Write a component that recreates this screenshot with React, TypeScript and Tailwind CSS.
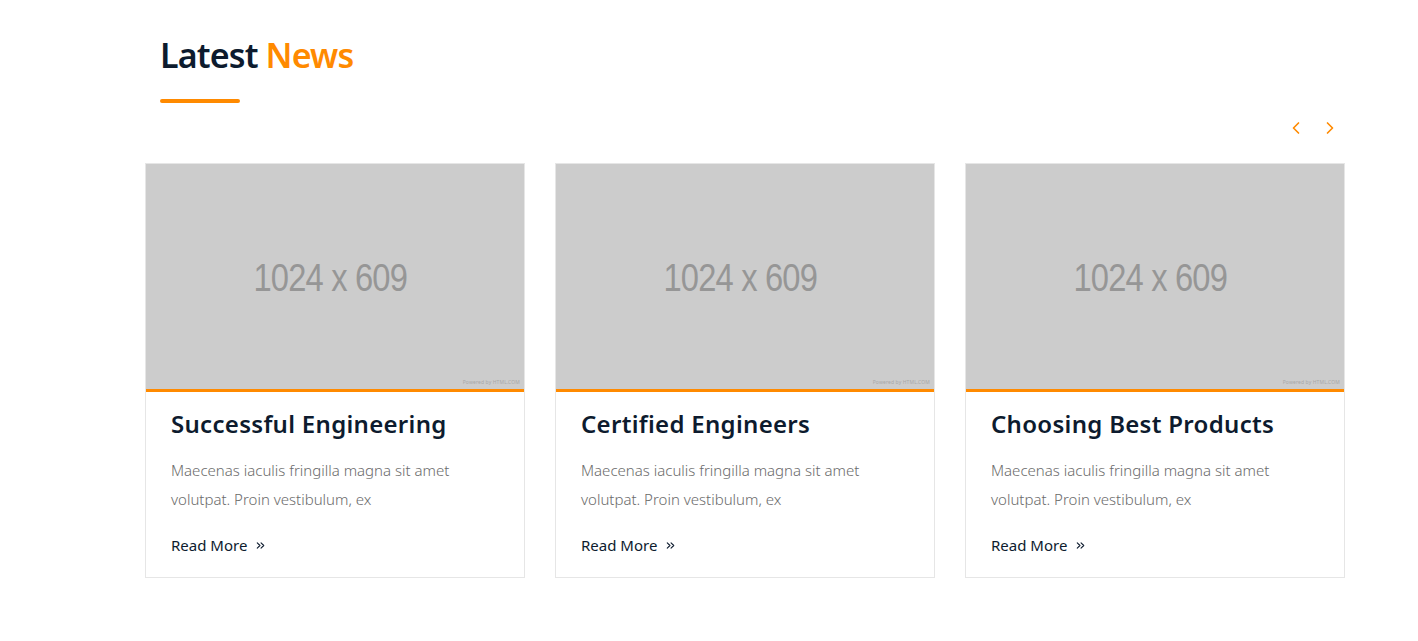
import React from 'react';
import { ChevronLeft, ChevronRight, ChevronsRight } from 'lucide-react';

const posts = [
  { id: 1, title: 'Successful Engineering' },
  { id: 2, title: 'Certified Engineers' },
  { id: 3, title: 'Choosing Best Products' },
];

const excerpt = 'Maecenas iaculis fringilla magna sit amet volutpat. Proin vestibulum, ex';

const Placeholder: React.FC = () => (
  <div className="relative h-[228px] bg-[#cccccc] border-b-[3px] border-[#ff8a00] flex items-center justify-center">
    <span
      className="text-[38px] text-[#969696] scale-x-[0.86] tracking-tight -ml-[10px] mt-[3px]"
      style={{ fontFamily: '"Liberation Sans", Arial, sans-serif' }}
    >
      1024 x 609
    </span>
    <span className="absolute right-[4px] bottom-[3px] text-[5px] text-[#a8a8a8] tracking-wide">
      Powered by HTML.COM
    </span>
  </div>
);

export default function App() {
  return (
    <div className="min-h-[641px] bg-white" style={{ fontFamily: '"Noto Sans", "Open Sans", sans-serif' }}>
      <div className="w-[1200px] ml-[145px] pt-[33px]">
        <div className="px-[15px]">
          <h2 className="text-[34px] font-semibold leading-[44px] text-[#0d1b2e] tracking-tight">
            Latest <span className="text-[#ff8a00]">News</span>
          </h2>
          <div className="mt-[22px] w-[80px] h-[4px] rounded-full bg-[#ff8a00]" />
        </div>

        <div className="flex justify-end gap-[14px] mt-[15px] pr-[5px] text-[#ff8a00]">
          <button><ChevronLeft className="w-[20px] h-[20px]" strokeWidth={2} /></button>
          <button><ChevronRight className="w-[20px] h-[20px]" strokeWidth={2} /></button>
        </div>

        <div className="grid grid-cols-3 gap-[30px] mt-[25px]">
          {posts.map(post => (
            <div key={post.id} className="border border-[#e6e6e6] bg-white">
              <Placeholder />
              <div className="px-[25px] pt-[15px] pb-[21px]">
                <h3 className="text-[24px] font-semibold leading-[34px] text-[#0d1b2e] tracking-[0.3px]">
                  {post.title}
                </h3>
                <p className="mt-[15px] text-[15px] leading-[29px] text-[#6b6b6b] font-light">
                  {excerpt}
                </p>
                <a className="mt-[20px] flex items-center gap-[7px] text-[15px] leading-[22px] text-[#0d1b2e] cursor-pointer">
                  Read More
                  <ChevronsRight className="w-[13px] h-[13px]" strokeWidth={2} />
                </a>
              </div>
            </div>
          ))}
        </div>
      </div>
    </div>
  );
}
